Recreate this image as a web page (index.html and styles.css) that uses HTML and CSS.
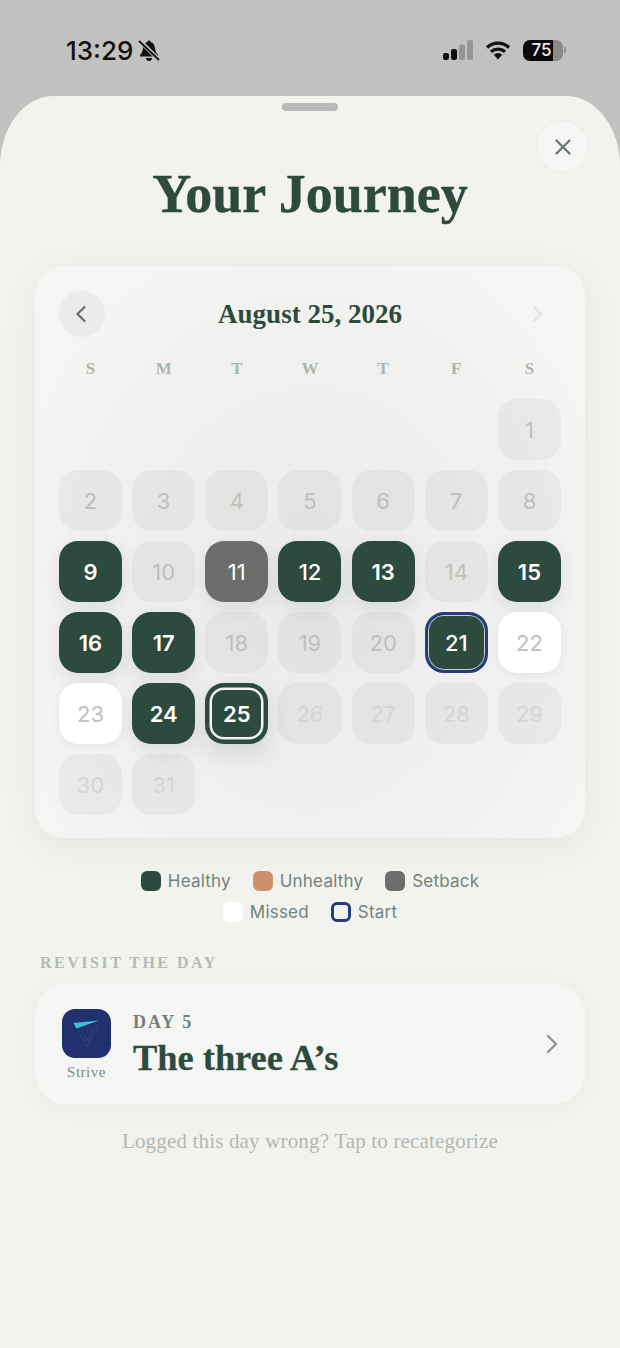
FILE: index.html
```html
<!DOCTYPE html>
<html lang="en">
<head>
    <meta charset="UTF-8">
    <meta name="viewport" content="width=device-width, initial-scale=1.0">
    <title>Your Journey</title>
    <link rel="stylesheet" href="styles.css">
</head>
<body>
    <div class="status-bar">
        <div class="status-left">
            <span class="clock">13:29</span>
            <svg class="bell" width="24" height="24" viewBox="0 0 24 24">
                <path d="M12 2.500c-.9 0-1.500.6-1.500 1.400C7.600 4.700 6.300 7 6 10c-.3 3-1 5-3 7v1.500h18V17c-2-2-2.700-4-3-7-.3-3-1.600-5.300-4.500-6.100 0-.8-.6-1.400-1.500-1.400z" fill="#111"/>
                <path d="M9 20a3 3 0 0 0 6 0z" fill="#111"/>
                <path d="M2.500 2.500l19 19" stroke="#c1c1bf" stroke-width="4.200"/>
                <path d="M2 3l20 19" stroke="#111" stroke-width="1.800"/>
            </svg>
        </div>
        <div class="status-right">
            <svg class="signal" width="32" height="22" viewBox="0 0 32 22">
                <rect x="1" y="14" width="6" height="7" rx="2" fill="#111"/>
                <rect x="9" y="10" width="6" height="11" rx="2" fill="#111"/>
                <rect x="17" y="5.500" width="6" height="15.500" rx="2" fill="#969694"/>
                <rect x="25" y="1" width="6" height="20" rx="2" fill="#969694"/>
            </svg>
            <svg class="wifi" width="26" height="20" viewBox="0 0 26 20">
                <path d="M2 7.500a16 16 0 0 1 22 0M6 11.800a10.500 10.500 0 0 1 14 0" fill="none" stroke="#111" stroke-width="3.200"/>
                <path d="M13 19.500l-4.200-4.700a6 6 0 0 1 8.400 0z" fill="#111"/>
            </svg>
            <div class="battery"><span>75</span></div>
            <div class="battery-nub"></div>
        </div>
    </div>

    <main class="sheet">
        <div class="handle"></div>
        <button class="close-btn" aria-label="Close">
            <svg width="20" height="20" viewBox="0 0 20 20">
                <path d="M3.500 3.500l13 13M16.500 3.500l-13 13" stroke="#64756d" stroke-width="2.200" stroke-linecap="round"/>
            </svg>
        </button>

        <h1>Your Journey</h1>

        <section class="calendar">
            <div class="cal-head">
                <button class="nav-btn" aria-label="Previous">
                    <svg width="14" height="20" viewBox="0 0 14 20">
                        <path d="M9.500 3L2.500 10l7 7" fill="none" stroke="#64756d" stroke-width="2.300" stroke-linecap="round" stroke-linejoin="round"/>
                    </svg>
                </button>
                <div class="cal-title">August 25, 2026</div>
                <button class="nav-btn next" aria-label="Next">
                    <svg width="14" height="20" viewBox="0 0 14 20">
                        <path d="M3 3l7 7-7 7" fill="none" stroke="#e2e3e0" stroke-width="2.300" stroke-linecap="round" stroke-linejoin="round"/>
                    </svg>
                </button>
            </div>

            <div class="weekdays">
                <span>S</span><span>M</span><span>T</span><span>W</span><span>T</span><span>F</span><span>S</span>
            </div>

            <div class="days">
                <div class="blank"></div><div class="blank"></div><div class="blank"></div><div class="blank"></div><div class="blank"></div><div class="blank"></div>
                <div class="day">1</div>
                <div class="day">2</div>
                <div class="day">3</div>
                <div class="day">4</div>
                <div class="day">5</div>
                <div class="day">6</div>
                <div class="day">7</div>
                <div class="day">8</div>
                <div class="day healthy">9</div>
                <div class="day">10</div>
                <div class="day setback">11</div>
                <div class="day healthy medium">12</div>
                <div class="day healthy">13</div>
                <div class="day">14</div>
                <div class="day healthy">15</div>
                <div class="day healthy">16</div>
                <div class="day healthy">17</div>
                <div class="day">18</div>
                <div class="day">19</div>
                <div class="day">20</div>
                <div class="day healthy medium start">21</div>
                <div class="day missed">22</div>
                <div class="day missed">23</div>
                <div class="day healthy">24</div>
                <div class="day healthy today">25</div>
                <div class="day future">26</div>
                <div class="day future">27</div>
                <div class="day future">28</div>
                <div class="day future">29</div>
                <div class="day future">30</div>
                <div class="day future">31</div>
            </div>
        </section>

        <div class="legend">
            <div class="legend-row">
                <span class="legend-item"><i class="swatch sw-healthy"></i>Healthy</span>
                <span class="legend-item"><i class="swatch sw-unhealthy"></i>Unhealthy</span>
                <span class="legend-item"><i class="swatch sw-setback"></i>Setback</span>
            </div>
            <div class="legend-row">
                <span class="legend-item"><i class="swatch sw-missed"></i>Missed</span>
                <span class="legend-item"><i class="swatch sw-start"></i>Start</span>
            </div>
        </div>

        <h2 class="section-label">REVISIT THE DAY</h2>

        <section class="lesson">
            <div class="app">
                <svg class="app-icon" width="49" height="49" viewBox="0 0 49 49">
                    <rect width="49" height="49" rx="13" fill="#22306f"/>
                    <path d="M16.500 21.500l8.500 16 11-21.500M20 22l5 9.500 6-12" fill="none" stroke="#3a4a88" stroke-width="0.800"/>
                    <path d="M11.500 14l25.500-2.500-22.500 8z" fill="#3dbde0"/>
                </svg>
                <span class="app-name">Strive</span>
            </div>
            <div class="lesson-text">
                <div class="lesson-day">DAY 5</div>
                <div class="lesson-title">The three A’s</div>
            </div>
            <svg class="chevron" width="14" height="22" viewBox="0 0 14 22">
                <path d="M3 3l8 8-8 8" fill="none" stroke="#8b9791" stroke-width="2.300" stroke-linecap="round" stroke-linejoin="round"/>
            </svg>
        </section>

        <p class="hint">Logged this day wrong? Tap to recategorize</p>
    </main>
</body>
</html>
```

FILE: styles.css
```css
* {
    margin: 0;
    padding: 0;
    box-sizing: border-box;
}

body {
    width: 620px;
    height: 1348px;
    overflow: hidden;
    background-color: #c1c1bf;
    font-family: "Inter", sans-serif;
}

button {
    border: none;
    background: none;
}

/* status bar */
.status-bar {
    height: 96px;
    display: flex;
    justify-content: space-between;
    align-items: flex-start;
    padding: 35px 54px 0 66px;
}

.status-left {
    display: flex;
    align-items: center;
    gap: 4px;
    height: 30px;
}

.clock {
    font-size: 26px;
    font-weight: 500;
    color: #111;
}

.status-right {
    display: flex;
    align-items: center;
    height: 30px;
}

.signal {
    margin-right: 11px;
}

.wifi {
    margin-right: 12px;
}

.battery {
    width: 40px;
    height: 21px;
    border-radius: 7px;
    background: linear-gradient(90deg, #0a0a0a 75%, #8a8a88 75%);
    color: #eee;
    font-size: 17px;
    font-weight: 500;
    text-align: center;
    line-height: 21px;
    padding-right: 3px;
}

.battery-nub {
    width: 2px;
    height: 6px;
    margin-left: 1px;
    border-radius: 0 2px 2px 0;
    background-color: #8a8a88;
}

/* sheet */
.sheet {
    position: relative;
    height: 1252px;
    background-color: #f2f3ef;
    border-radius: 54px 54px 0 0 / 70px 70px 0 0;
    padding: 0 35px;
}

.handle {
    width: 56px;
    height: 8px;
    margin: 0 auto;
    position: relative;
    top: 7px;
    border-radius: 4px;
    background-color: #b9b9b7;
}

.close-btn {
    position: absolute;
    top: 25px;
    right: 32px;
    width: 51px;
    height: 51px;
    border-radius: 50%;
    background-color: #f5f5f3;
    box-shadow: 0 0 2px rgba(0, 0, 0, 0.08);
    display: flex;
    align-items: center;
    justify-content: center;
}

h1 {
    font-family: "Liberation Serif", serif;
    font-size: 54px;
    font-weight: 700;
    line-height: 64px;
    color: #2c4a3e;
    -webkit-text-stroke: 0.4px #2c4a3e;
    text-align: center;
    margin-top: 58px;
}

/* calendar card */
.calendar {
    width: 550px;
    height: 572px;
    margin-top: 40px;
    padding: 25px 24px 0;
    border-radius: 30px;
    background: radial-gradient(ellipse at 50% 58%, #ebebe9 0%, #f0f0ee 55%, #f5f5f3 85%);
    box-shadow: 0 8px 40px rgba(0, 0, 0, 0.06);
}

.cal-head {
    display: flex;
    align-items: center;
    justify-content: space-between;
    height: 46px;
}

.nav-btn {
    width: 46px;
    height: 46px;
    border-radius: 50%;
    background-color: #ebebe9;
    display: flex;
    align-items: center;
    justify-content: center;
}

.nav-btn.next {
    background: none;
}

.cal-title {
    font-family: "Liberation Serif", serif;
    font-size: 27px;
    font-weight: 700;
    color: #2c4a3e;
}

.weekdays {
    display: grid;
    grid-template-columns: repeat(7, 63px);
    justify-content: space-between;
    margin-top: 20px;
    font-family: "Liberation Serif", serif;
    font-size: 17px;
    font-weight: 700;
    line-height: 24px;
    color: #adb5b0;
    text-align: center;
}

.days {
    display: grid;
    grid-template-columns: repeat(7, 63px);
    grid-auto-rows: 61px;
    justify-content: space-between;
    row-gap: 10px;
    margin-top: 18px;
}

.day {
    display: flex;
    align-items: center;
    justify-content: center;
    border-radius: 19px;
    background-color: rgba(0, 0, 0, 0.04);
    font-size: 22px;
    color: #bcc1bd;
}

.day.future {
    color: #d4d6d3;
}

.day.healthy {
    background-color: #2c4a3e;
    color: #fff;
    font-weight: 600;
    box-shadow: 0 6px 18px rgba(44, 74, 62, 0.1);
}

.day.healthy.medium {
    font-weight: 500;
}

.day.setback {
    background-color: #6b6e6b;
    color: #fff;
    box-shadow: 0 6px 18px rgba(0, 0, 0, 0.08);
}

.day.missed {
    background-color: #fff;
    box-shadow: 0 2px 8px rgba(0, 0, 0, 0.06);
}

.day.start {
    border: 3px solid #263c7e;
    box-shadow: inset 0 0 0 1px #c9cfcb;
}

.day.today {
    box-shadow: inset 0 0 0 4.500px #2c4a3e, inset 0 0 0 7px #f2f3ef, 0 10px 24px rgba(44, 74, 62, 0.14);
}

/* legend */
.legend {
    margin-top: 32px;
    display: flex;
    flex-direction: column;
    gap: 9px;
}

.legend-row {
    display: flex;
    justify-content: center;
    gap: 22px;
    height: 22px;
}

.legend-item {
    display: flex;
    align-items: center;
    gap: 7px;
    font-size: 17px;
    letter-spacing: 0.2px;
    color: #74817b;
}

.swatch {
    width: 20px;
    height: 20px;
    border-radius: 6px;
}

.sw-healthy { background-color: #2c4a3e; }
.sw-unhealthy { background-color: #cf8f6c; }
.sw-setback { background-color: #6b6e6b; }
.sw-missed { background-color: #fff; }
.sw-start { border: 3px solid #263c7e; }

.section-label {
    font-family: "Liberation Serif", serif;
    font-size: 16px;
    font-weight: 700;
    letter-spacing: 2.500px;
    line-height: 20px;
    color: #b5bab5;
    margin: 30px 0 0 5px;
}

/* lesson card */
.lesson {
    width: 550px;
    height: 120px;
    margin-top: 11px;
    display: flex;
    align-items: center;
    padding: 0 26px 0 27px;
    border-radius: 30px;
    background-color: #f5f5f3;
    box-shadow: 0 4px 24px rgba(0, 0, 0, 0.04);
}

.app {
    width: 49px;
    padding-top: 2px;
    display: flex;
    flex-direction: column;
    align-items: center;
    gap: 6px;
}

.app-name {
    font-family: "Liberation Serif", serif;
    font-size: 15px;
    letter-spacing: 0.5px;
    color: #7f8a85;
}

.lesson-text {
    flex: 1;
    margin-left: 22px;
    padding-top: 3px;
}

.lesson-day {
    font-family: "Liberation Serif", serif;
    font-size: 18px;
    font-weight: 700;
    letter-spacing: 2px;
    line-height: 22px;
    color: #74817b;
}

.lesson-title {
    font-family: "Liberation Serif", serif;
    font-size: 36.400px;
    font-weight: 700;
    line-height: 44px;
    margin-top: 3px;
    color: #2c4a3e;
    -webkit-text-stroke: 0.3px #2c4a3e;
}

.hint {
    margin-top: 24px;
    font-family: "Liberation Serif", serif;
    font-size: 21px;
    letter-spacing: 0.17px;
    line-height: 26px;
    color: #b3b8b4;
    text-align: center;
}
```
